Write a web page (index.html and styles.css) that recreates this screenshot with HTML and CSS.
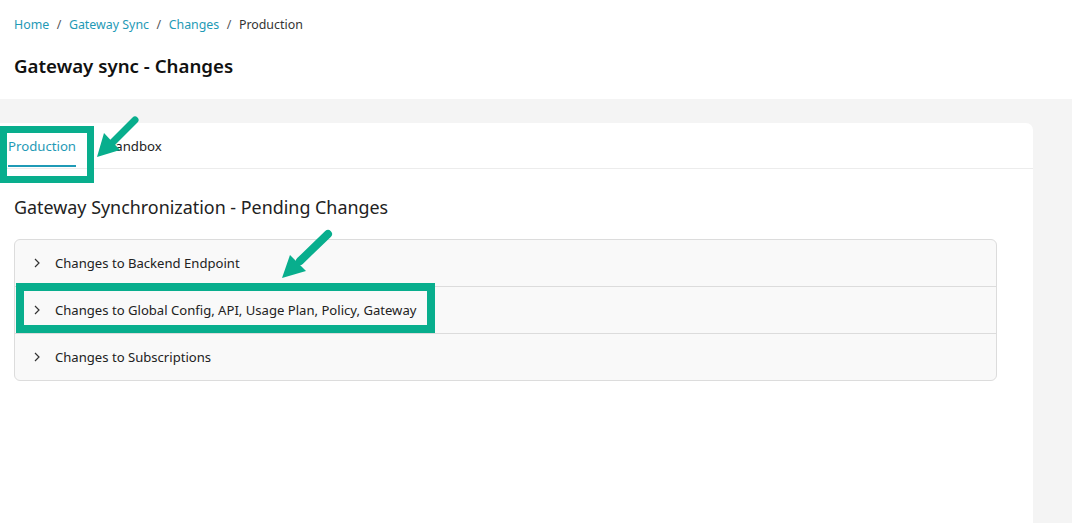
FILE: index.html
```
<!DOCTYPE html>
<html>
<head>
<meta charset="utf-8">
<link rel="stylesheet" href="styles.css">
</head>
<body>
<div class="page">
  <header class="top">
    <nav class="crumbs">
      <a class="crumb-link">Home</a><span class="sep">/</span>
      <a class="crumb-link">Gateway Sync</a><span class="sep">/</span>
      <a class="crumb-link">Changes</a><span class="sep">/</span>
      <span class="crumb-current">Production</span>
    </nav>
    <h1 class="title">Gateway sync - Changes</h1>
  </header>
  <main class="main">
    <section class="card">
      <div class="tabs">
        <div class="tab active">Production</div>
        <div class="tab">Sandbox</div>
      </div>
      <div class="card-body">
        <h2 class="section-title">Gateway Synchronization - Pending Changes</h2>
        <div class="accordion">
          <div class="acc-row"><span class="chev"><svg width="10" height="10" viewBox="0 0 10 10"><path d="M3 1 L7 5 L3 9" fill="none" stroke="#333" stroke-width="1.2"/></svg></span><span class="acc-text">Changes to Backend Endpoint</span></div>
          <div class="acc-row"><span class="chev"><svg width="10" height="10" viewBox="0 0 10 10"><path d="M3 1 L7 5 L3 9" fill="none" stroke="#333" stroke-width="1.2"/></svg></span><span class="acc-text">Changes to Global Config, API, Usage Plan, Policy, Gateway</span></div>
          <div class="acc-row"><span class="chev"><svg width="10" height="10" viewBox="0 0 10 10"><path d="M3 1 L7 5 L3 9" fill="none" stroke="#333" stroke-width="1.2"/></svg></span><span class="acc-text">Changes to Subscriptions</span></div>
        </div>
      </div>
    </section>
    <div class="side"></div>
  </main>
  <svg class="annot" width="1072" height="523" viewBox="0 0 1072 523">
    <rect x="3.5" y="129.5" width="87" height="50" fill="none" stroke="#08ae8d" stroke-width="7"/>
    <rect x="20" y="287" width="411" height="42" fill="none" stroke="#08ae8d" stroke-width="8"/>
    <line x1="135" y1="120" x2="111" y2="144" stroke="#08ae8d" stroke-width="7" stroke-linecap="round"/>
    <polygon points="97,157 104,133 120,150" fill="#08ae8d"/>
    <line x1="328" y1="234" x2="300" y2="261" stroke="#08ae8d" stroke-width="8" stroke-linecap="round"/>
    <polygon points="282,278 290,255 306,271" fill="#08ae8d"/>
  </svg>
</div>
</body>
</html>
```
FILE: styles.css
```
* { box-sizing: border-box; }
html, body { margin: 0; padding: 0; }
body {
  font-family: "Noto Sans", "Open Sans", sans-serif;
  color: #222;
  background: #fff;
  width: 1072px;
  height: 523px;
  overflow: hidden;
}
.page { position: relative; width: 1072px; height: 523px; display: flex; flex-direction: column; }
.top { height: 99px; padding: 16px 14px 0; background: #fff; }
.crumbs { font-size: 12.4px; line-height: 18px; color: #333; display: flex; align-items: center; }
.crumb-link { color: #1f9ab6; }
.sep { color: #555; margin: 0 7.5px; }
.crumb-current { color: #333; }
.title { margin: 20px 0 0; font-size: 18.7px; font-weight: 600; line-height: 24px; color: #111; }
.main { flex: 1; background: #f4f4f4; display: flex; padding-top: 24px; }
.card { width: 1033px; background: #fff; border-radius: 0 7px 0 0; }
.side { flex: 1; }
.tabs { height: 46px; border-bottom: 1px solid #ececec; display: flex; padding-left: 8px; gap: 32px; }
.tab { font-size: 13.2px; line-height: 18px; padding-top: 14px; color: #222; }
.tab.active { color: #1f9ab6; border-bottom: 2px solid #1f9ab6; height: 44px; width: 68px; }
.card-body { padding: 26px 36px 0 14px; }
.section-title { margin: 0; font-size: 17.9px; font-weight: 400; line-height: 24px; color: #222; }
.accordion { margin-top: 20px; width: 983px; border: 1px solid #dcdcdc; border-radius: 6px; background: #f9f9f9; }
.acc-row { height: 47px; display: flex; align-items: center; padding-left: 17px; border-top: 1px solid #dcdcdc; }
.acc-row:first-child { border-top: none; height: 46px; }
.chev { width: 23px; display: flex; align-items: center; }
.acc-text { font-size: 13.1px; color: #222; }
.annot { position: absolute; left: 0; top: 0; pointer-events: none; }
```
